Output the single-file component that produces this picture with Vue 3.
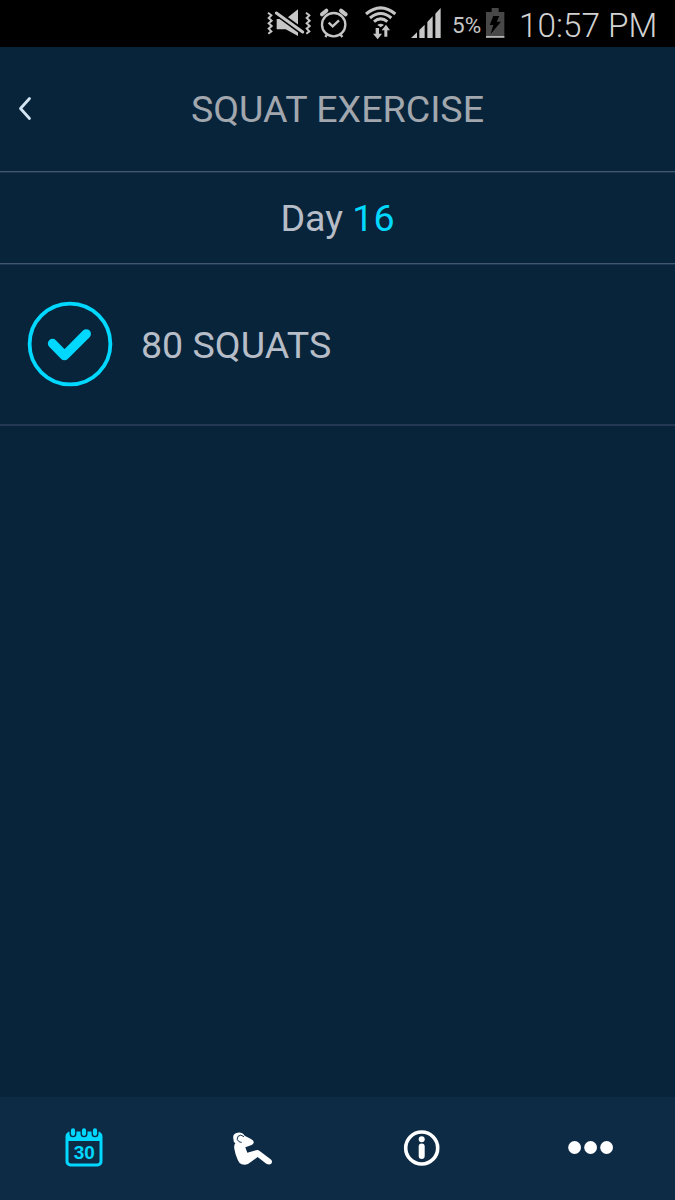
<template>
  <div class="app">
    <div class="status-bar">
      <svg class="mute" viewBox="18 0 138 141" width="46" height="47">
        <path class="thin" d="M24 38l10 8-8 8 9 8-9 8 9 8-9 8 8 8-9 7" />
        <path class="thin" d="M138 38l10 8-8 8 9 8-9 8 9 8-9 8 8 8-9 7" />
        <path d="M50 57h27l37-29v80L77 88H50z" />
        <path class="gap" d="M45 35l85 62" />
        <path class="slash" d="M49 39l79 57" />
      </svg>
      <svg class="alarm" viewBox="177 0 90 141" width="30" height="47">
        <circle class="line" cx="221" cy="74" r="35" />
        <path class="ear" d="M186 43l13-11M243 32l14 11" />
        <path class="line" d="M201 104l-5 7M242 104l5 7M206 68l12 11 19-18" />
      </svg>
      <svg class="wifi" viewBox="27 0 102 141" width="34" height="47">
        <path class="arc" d="M33 42Q77 5 121 42M45 54Q77 27 109 54M57 65Q77 48 97 65" />
        <path d="M67 75q10-8 20 0l-10 7z" />
        <path d="M62 84h10v17h9l-13 17-14-17h8zM88 110V91h-8l13-17 12 17h-8v19z" />
      </svg>
      <svg class="signal" viewBox="165 0 96 141" width="32" height="47">
        <path d="M168 114l18-17v17zM193 114V90l16-16v40zM217 114V66l16-17v65zM241 114V41l16-17v90z" />
      </svg>
      <span class="percent">5%</span>
      <svg class="battery" viewBox="391 0 60 141" width="20" height="47">
        <path class="shell" d="M394 36h17V24h21v12h17v78h-55z" />
        <path class="level" d="M394 108h55v5h-55z" />
        <path class="bolt" d="M416 48h18l-8 17h13l-31 37 8-27h-11z" />
      </svg>
      <span class="clock">10:57 PM</span>
    </div>

    <header class="header">
      <svg class="back" viewBox="0 0 14 26" width="14" height="26">
        <path d="M11.500 2.500L2.500 12.500l9 10" />
      </svg>
      <h1 class="title">SQUAT EXERCISE</h1>
    </header>

    <div class="day">Day <span class="day-number">{{ day }}</span></div>

    <div v-for="item in exercises" :key="item.name" class="exercise">
      <svg class="check" viewBox="0 0 86 86" width="86" height="86">
        <circle cx="43" cy="43" r="40.400" />
        <path d="M25.500 42.500l12 12.200 21.800-21.800" />
      </svg>
      <span class="exercise-name">{{ item.count }} {{ item.name }}</span>
    </div>

    <nav class="tabs">
      <a class="tab active">
        <svg viewBox="0 0 40 42" width="40" height="42">
          <path
            fill-rule="evenodd"
            d="M6.500 4.500h27a5 5 0 0 1 5 5v25a5 5 0 0 1-5 5h-27a5 5 0 0 1-5-5v-25a5 5 0 0 1 5-5zM4.500 14v20a2.500 2.500 0 0 0 2.500 2.500h26a2.500 2.500 0 0 0 2.500-2.500v-20z"
          />
          <path class="ring-gap" d="M9 3.400v3.400M20 3.400v3.400M31 3.400v3.400" />
          <path class="ring" d="M9 3.400v3.400M20 3.400v3.400M31 3.400v3.400" />
          <text x="20.200" y="32">30</text>
        </svg>
      </a>
      <a class="tab">
        <svg viewBox="38 29 124 110" width="41.300" height="36.700">
          <path
            class="person"
            d="M42 55Q39 40 55 37Q69 35 76 46L95 56Q105 61 103 68Q100 75 91 76L78 81L84 97L110 90Q116 87 121 92L154 117Q162 124 155 131Q149 134 141 130L115 110L86 131Q77 135 67 132Q60 130 55 118Q47 100 45 85Q43 74 48 69Q42 65 42 55Z"
          />
          <path class="headband" d="M74 49Q64 40 56 48Q50 58 58 63Q62 66 67 66" />
        </svg>
      </a>
      <a class="tab">
        <svg viewBox="0 0 38 38" width="38" height="38">
          <circle class="info-ring" cx="18.700" cy="19" r="16" />
          <circle cx="18.700" cy="10.200" r="3" />
          <rect x="15.700" y="14.500" width="6" height="15.500" rx="3" />
        </svg>
      </a>
      <a class="tab">
        <svg viewBox="0 0 46 14" width="46" height="14">
          <circle cx="6.600" cy="6.500" r="6.400" />
          <circle cx="22.600" cy="6.500" r="6.400" />
          <circle cx="38.600" cy="6.500" r="6.400" />
        </svg>
      </a>
    </nav>
  </div>
</template>

<script setup>
import { ref } from 'vue'

const day = ref(16)
const exercises = ref([{ count: 80, name: 'SQUATS' }])
</script>

<style>
body {
  margin: 0;
  background: #08243b;
}
</style>

<style scoped>
.app {
  display: flex;
  flex-direction: column;
  width: 675px;
  height: 1200px;
  overflow: hidden;
  background: #08243b;
  color: #b7bdc7;
  font-family: Roboto, "Liberation Sans", sans-serif;
}

.app svg {
  display: block;
  flex: none;
}

.status-bar {
  display: flex;
  flex: none;
  height: 47px;
  padding-left: 266px;
  background: #000;
  color: #c6c6c6;
  fill: #c6c6c6;
  line-height: 50px;
  white-space: nowrap;
}

.thin,
.line,
.arc,
.ear,
.slash,
.gap {
  fill: none;
  stroke: #c6c6c6;
}

.thin {
  stroke-width: 6;
}

.line {
  stroke-width: 7;
}

.arc {
  stroke-width: 9;
}

.ear {
  stroke-width: 12;
  stroke-linecap: round;
}

.slash {
  stroke-width: 9;
  stroke-linecap: round;
}

.gap {
  stroke: #000;
  stroke-width: 19;
}

.alarm {
  margin-left: 7px;
}

.wifi {
  margin-left: 15px;
}

.signal {
  margin-left: 12px;
}

.percent {
  width: 33px;
  margin-left: 10px;
  font-size: 22.500px;
}

.shell {
  fill: #484848;
}

.level {
  fill: #b8b8b8;
}

.bolt {
  fill: #000;
}

.clock {
  margin-left: 14px;
  color: #d2d2d2;
  font-size: 33.300px;
  font-weight: 300;
  line-height: 52px;
}

.header {
  display: flex;
  flex: none;
  align-items: center;
  box-sizing: border-box;
  height: 125px;
  padding: 0 32px 0 18px;
  border-bottom: 1px solid #43566f;
  box-shadow: 0 1px #1d3550;
}

.back {
  fill: none;
  stroke: #d3e5f2;
  stroke-width: 2.800;
  stroke-linecap: round;
  stroke-linejoin: round;
}

.title {
  flex: 1;
  margin: 0 0 1px;
  color: #a2a7ae;
  font-size: 37.600px;
  font-weight: 400;
  text-align: center;
}

.day {
  flex: none;
  box-sizing: border-box;
  height: 92px;
  border-bottom: 1px solid #43566f;
  box-shadow: 0 1px #1d3550;
  font-size: 37.600px;
  line-height: 93px;
  text-align: center;
}

.day-number {
  color: #00d8ff;
}

.exercise {
  display: flex;
  flex: none;
  align-items: center;
  box-sizing: border-box;
  height: 162px;
  padding-left: 27px;
  border-bottom: 2px solid #233852;
  font-size: 37.600px;
}

.exercise-name {
  margin: 1px 0 0 28px;
}

.check {
  fill: none;
  stroke: #00d8ff;
}

.check circle {
  stroke-width: 3.800;
}

.check path {
  stroke-width: 9.300;
  stroke-linecap: round;
  stroke-linejoin: round;
}

.tabs {
  display: flex;
  flex: none;
  box-sizing: border-box;
  height: 103px;
  margin-top: auto;
  padding-bottom: 1px;
  background: #0e2b46;
}

.tab {
  display: flex;
  flex: 1;
  align-items: center;
  justify-content: center;
  color: #fff;
  fill: currentColor;
}

.tab.active {
  color: #00d8ff;
}

.tab text {
  font-family: "Liberation Sans", sans-serif;
  font-size: 19px;
  font-weight: 700;
  text-anchor: middle;
}

.ring,
.ring-gap {
  fill: none;
  stroke: currentColor;
  stroke-width: 4.200;
  stroke-linecap: round;
}

.ring-gap {
  stroke: #0e2b46;
  stroke-width: 7;
}

.info-ring {
  fill: none;
  stroke: currentColor;
  stroke-width: 3.600;
}

.headband {
  fill: none;
  stroke: #0e2b46;
  stroke-width: 3;
}
</style>
